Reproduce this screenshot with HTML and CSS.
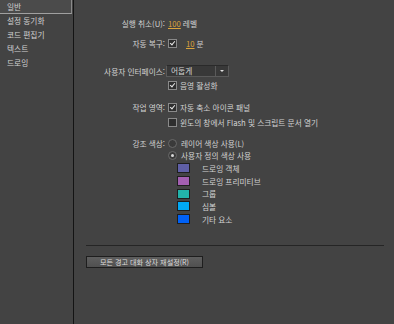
FILE: index.html
```html
<!DOCTYPE html>
<html lang="ko">
<head>
<meta charset="utf-8">
<link rel="stylesheet" href="styles.css">
</head>
<body>
<div class="app">
  <nav class="sidebar">
    <div class="nav-item selected">일반</div>
    <div class="nav-item">설정 동기화</div>
    <div class="nav-item">코드 편집기</div>
    <div class="nav-item">텍스트</div>
    <div class="nav-item">드로잉</div>
  </nav>
  <main class="main">
    <div class="row r1"><span class="label">실행 취소(U):</span><span class="ctrl"><span class="num">100</span> 레벨</span></div>
    <div class="row r2"><span class="label">자동 복구:</span><span class="ctrl"><span class="cb checked"></span><span class="num num-gap">10</span> 분</span></div>
    <div class="row r3"><span class="label">사용자 인터페이스:</span><span class="ctrl"><span class="select"><span class="select-text">어둡게</span><span class="select-arrow"></span></span></span></div>
    <div class="row r4"><span class="label"></span><span class="ctrl"><span class="cb checked"></span>음영 활성화</span></div>
    <div class="row r5"><span class="label">작업 영역:</span><span class="ctrl"><span class="cb checked"></span>자동 축소 아이콘 패널</span></div>
    <div class="row r6"><span class="label"></span><span class="ctrl"><span class="cb"></span>윈도의 창에서 Flash 및 스크립트 문서 열기</span></div>
    <div class="row r7"><span class="label">강조 색상:</span><span class="ctrl"><span class="radio"></span>레이어 색상 사용(L)</span></div>
    <div class="row r8"><span class="label"></span><span class="ctrl"><span class="radio on"></span>사용자 정의 색상 사용</span></div>
    <div class="swatches">
      <div class="sw-row"><span class="sw c1"></span>드로잉 객체</div>
      <div class="sw-row"><span class="sw c2"></span>드로잉 프리미티브</div>
      <div class="sw-row"><span class="sw c3"></span>그룹</div>
      <div class="sw-row"><span class="sw c4"></span>심볼</div>
      <div class="sw-row"><span class="sw c5"></span>기타 요소</div>
    </div>
    <div class="separator"></div>
    <button class="btn">모든 경고 대화 상자 재설정(R)</button>
  </main>
</div>
</body>
</html>
```

FILE: styles.css
```css
html, body {
  margin: 0;
  padding: 0;
  background: #434343;
}
body {
  width: 394px;
  height: 324px;
  overflow: hidden;
  font-family: "Noto Sans CJK KR", "Noto Sans", sans-serif;
  font-size: 7.7px;
  color: #d2d2d2;
}
.app {
  display: flex;
  height: 324px;
}
.sidebar {
  width: 73px;
  border-right: 1px solid #141414;
  flex: none;
}
.nav-item {
  height: 14px;
  line-height: 14px;
  padding-left: 7px;
  white-space: nowrap;
}
.nav-item.selected {
  height: 13px;
  line-height: 13px;
  background: #4b4b4b;
  border-bottom: 1px solid #a0a0a0;
  border-right: 1px solid #8a8a8a;
  width: 64px;
}
.main {
  flex: 1;
  display: flex;
  flex-direction: column;
  padding-top: 17px;
}
.row {
  display: flex;
  align-items: center;
  height: 12px;
  white-space: nowrap;
}
.r2 { margin-top: 8px; }
.r3 { margin-top: 16px; }
.r4 { margin-top: 2px; }
.r5 { margin-top: 10px; }
.r6 { margin-top: 3px; }
.r7 { margin-top: 9px; }
.label {
  width: 91px;
  text-align: right;
  flex: none;
}
.ctrl {
  display: flex;
  align-items: center;
  margin-left: 3px;
}
.num {
  color: #dba53c;
  text-decoration: underline;
  margin-right: 2px;
}
.num-gap { margin-left: 6px; }
.cb {
  width: 7px;
  height: 7px;
  border: 1px solid #8a8a8a;
  background: #2e2e2e;
  margin-right: 3px;
  position: relative;
  flex: none;
}
.cb.checked::after {
  content: "";
  position: absolute;
  left: 2px;
  top: 0px;
  width: 2px;
  height: 4px;
  border-right: 1px solid #e8e8e8;
  border-bottom: 1px solid #e8e8e8;
  transform: rotate(40deg);
}
.radio {
  width: 7px;
  height: 7px;
  border: 1px solid #6a6a6a;
  border-radius: 50%;
  background: #3a3a3a;
  margin-right: 4px;
  position: relative;
  flex: none;
}
.radio.on::after {
  content: "";
  position: absolute;
  left: 2px;
  top: 2px;
  width: 3px;
  height: 3px;
  border-radius: 50%;
  background: #d8d8d8;
}
.select {
  display: flex;
  align-items: center;
  width: 61px;
  height: 10px;
  border: 1px solid #5a5a5a;
  border-top-color: #2a2a2a;
  background: #383838;
  margin-left: -2px;
}
.select-text {
  flex: 1;
  padding-left: 4px;
  line-height: 10px;
}
.select-arrow {
  width: 12px;
  height: 10px;
  border-left: 1px solid #5a5a5a;
  position: relative;
}
.select-arrow::after {
  content: "";
  position: absolute;
  left: 4px;
  top: 4px;
  border-left: 2px solid transparent;
  border-right: 2px solid transparent;
  border-top: 2px solid #e0e0e0;
}
.swatches {
  display: flex;
  flex-direction: column;
  margin-top: 1px;
  margin-left: 103px;
}
.sw-row {
  display: flex;
  align-items: center;
  height: 12.7px;
  white-space: nowrap;
}
.sw {
  width: 11px;
  height: 8px;
  border: 1px solid #1e1e1e;
  margin-right: 12px;
  flex: none;
}
.c1 { background: #5f5fa6; }
.c2 { background: #a35fb1; }
.c3 { background: #22b3aa; }
.c4 { background: #00a9f5; }
.c5 { background: #0061f6; }
.separator {
  margin-top: 20px;
  margin-left: 12px;
  width: 298px;
  height: 1px;
  background: #252525;
}
.btn {
  margin-top: 10px;
  margin-left: 12px;
  width: 117px;
  height: 12px;
  padding: 0;
  border: 1px solid #1e1e1e;
  background: linear-gradient(#5e5e5e, #505050);
  color: #dcdcdc;
  font-family: "Noto Sans CJK KR", "Noto Sans", sans-serif;
  font-size: 7.1px;
  line-height: 10px;
  text-align: center;
}
```
